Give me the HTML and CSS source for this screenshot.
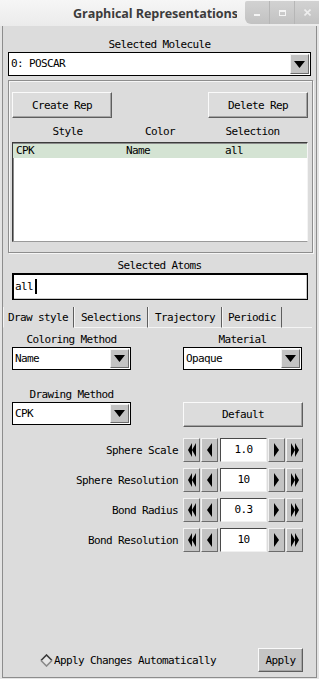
FILE: index.html
```html
<!DOCTYPE html>
<html lang="en">
<head>
    <meta charset="UTF-8">
    <meta name="viewport" content="width=device-width, initial-scale=1.0">
    <title>Graphical Representations</title>
    <link rel="stylesheet" href="styles.css">
</head>
<body>
<div class="window">
    <div class="titlebar">
        <div class="title">Graphical Representations</div>
        <div class="wm-buttons">
            <span class="wm-btn"><svg width="6" height="6"><rect x="0" y="4" width="6" height="2" fill="#f4f4f4"/></svg></span>
            <span class="wm-btn"><svg width="7" height="6"><rect x="0.5" y="0.5" width="6" height="5" fill="none" stroke="#f4f4f4"/><rect x="0" y="0" width="7" height="2" fill="#f4f4f4"/></svg></span>
            <span class="wm-btn"><svg width="7" height="7"><path d="M0.5 0.5 L6.5 6.5 M6.5 0.5 L0.5 6.5" stroke="#eeeeee" stroke-width="1.6"/></svg></span>
        </div>
    </div>

    <div class="content">
        <div class="label">Selected Molecule</div>
        <div class="combo molecule">
            <span class="combo-text">0: POSCAR</span>
            <span class="combo-arrow"><svg width="11" height="7"><polygon points="0,0 11,0 5.5,7" fill="#000"/></svg></span>
        </div>

        <div class="reps-frame">
            <div class="rep-buttons">
                <button class="tk-btn">Create Rep</button>
                <button class="tk-btn">Delete Rep</button>
            </div>
            <div class="rep-header">
                <span class="col-style">Style</span>
                <span class="col-color">Color</span>
                <span class="col-sel">Selection</span>
            </div>
            <div class="rep-list">
                <div class="rep-row selected">
                    <span class="cell-style">CPK</span>
                    <span class="cell-color">Name</span>
                    <span>all</span>
                </div>
            </div>
        </div>

        <div class="label atoms-label">Selected Atoms</div>
        <div class="entry">all<span class="caret"></span></div>

        <div class="tabs">
            <span class="tab active">Draw style</span>
            <span class="tab">Selections</span>
            <span class="tab">Trajectory</span>
            <span class="tab">Periodic</span>
            <span class="tab-rest"></span>
        </div>

        <div class="tab-body">
            <div class="pair">
                <div class="field-col">
                    <div class="label">Coloring Method</div>
                    <div class="combo small">
                        <span class="combo-text">Name</span>
                        <span class="combo-arrow"><svg width="11" height="7"><polygon points="0,0 11,0 5.5,7" fill="#000"/></svg></span>
                    </div>
                </div>
                <div class="field-col">
                    <div class="label">Material</div>
                    <div class="combo small">
                        <span class="combo-text">Opaque</span>
                        <span class="combo-arrow"><svg width="11" height="7"><polygon points="0,0 11,0 5.5,7" fill="#000"/></svg></span>
                    </div>
                </div>
            </div>

            <div class="pair second">
                <div class="field-col">
                    <div class="label">Drawing Method</div>
                    <div class="combo small">
                        <span class="combo-text">CPK</span>
                        <span class="combo-arrow"><svg width="11" height="7"><polygon points="0,0 11,0 5.5,7" fill="#000"/></svg></span>
                    </div>
                </div>
                <div class="field-col">
                    <button class="tk-btn default-btn">Default</button>
                </div>
            </div>

            <div class="spinners">
                <div class="spin-row">
                    <span class="spin-label">Sphere Scale</span>
                    <span class="arrow-btn"><svg width="8" height="14"><polygon points="4,0 4,14 0,7" /><polygon points="8,0 8,14 4,7" /></svg></span>
                    <span class="arrow-btn"><svg width="5" height="14"><polygon points="5,0 5,14 0,7" /></svg></span>
                    <span class="spin-value">1.0</span>
                    <span class="arrow-btn"><svg width="5" height="14"><polygon points="0,0 0,14 5,7" /></svg></span>
                    <span class="arrow-btn"><svg width="8" height="14"><polygon points="0,0 0,14 4,7" /><polygon points="4,0 4,14 8,7" /></svg></span>
                </div>
                <div class="spin-row">
                    <span class="spin-label">Sphere Resolution</span>
                    <span class="arrow-btn"><svg width="8" height="14"><polygon points="4,0 4,14 0,7" /><polygon points="8,0 8,14 4,7" /></svg></span>
                    <span class="arrow-btn"><svg width="5" height="14"><polygon points="5,0 5,14 0,7" /></svg></span>
                    <span class="spin-value">10</span>
                    <span class="arrow-btn"><svg width="5" height="14"><polygon points="0,0 0,14 5,7" /></svg></span>
                    <span class="arrow-btn"><svg width="8" height="14"><polygon points="0,0 0,14 4,7" /><polygon points="4,0 4,14 8,7" /></svg></span>
                </div>
                <div class="spin-row">
                    <span class="spin-label">Bond Radius</span>
                    <span class="arrow-btn"><svg width="8" height="14"><polygon points="4,0 4,14 0,7" /><polygon points="8,0 8,14 4,7" /></svg></span>
                    <span class="arrow-btn"><svg width="5" height="14"><polygon points="5,0 5,14 0,7" /></svg></span>
                    <span class="spin-value">0.3</span>
                    <span class="arrow-btn"><svg width="5" height="14"><polygon points="0,0 0,14 5,7" /></svg></span>
                    <span class="arrow-btn"><svg width="8" height="14"><polygon points="0,0 0,14 4,7" /><polygon points="4,0 4,14 8,7" /></svg></span>
                </div>
                <div class="spin-row">
                    <span class="spin-label">Bond Resolution</span>
                    <span class="arrow-btn"><svg width="8" height="14"><polygon points="4,0 4,14 0,7" /><polygon points="8,0 8,14 4,7" /></svg></span>
                    <span class="arrow-btn"><svg width="5" height="14"><polygon points="5,0 5,14 0,7" /></svg></span>
                    <span class="spin-value">10</span>
                    <span class="arrow-btn"><svg width="5" height="14"><polygon points="0,0 0,14 5,7" /></svg></span>
                    <span class="arrow-btn"><svg width="8" height="14"><polygon points="0,0 0,14 4,7" /><polygon points="4,0 4,14 8,7" /></svg></span>
                </div>
            </div>
        </div>

        <div class="footer">
            <label class="radio">
                <svg width="13" height="13">
                    <polygon points="6.5,1 12,6.5 6.5,12 1,6.5" fill="#e6e6e6"/>
                    <polyline points="1,6.5 6.5,1 12,6.5" fill="none" stroke="#3a3a3a" stroke-width="1.6"/>
                    <polyline points="1,6.5 6.5,12 12,6.5" fill="none" stroke="#8a8a8a" stroke-width="1.6"/>
                </svg>
                Apply Changes Automatically
            </label>
            <button class="tk-btn apply-btn">Apply</button>
        </div>
    </div>
</div>
</body>
</html>
```

FILE: styles.css
```css
body {
    margin: 0;
    background-color: #e4e4e4;
    font-family: 'DejaVu Sans Mono', 'Liberation Mono', monospace;
    font-size: 11px;
    letter-spacing: -0.62px;
    color: #000;
}
.window {
    width: 319px;
    height: 679px;
    display: flex;
    flex-direction: column;
}
.titlebar {
    height: 26px;
    display: flex;
    background: linear-gradient(#f6f6f6, #ebebeb);
}
.title {
    flex: 1;
    overflow: hidden;
    white-space: nowrap;
    padding-left: 73px;
    margin-right: 8px;
    font-family: 'Open Sans', 'Liberation Sans', sans-serif;
    font-weight: bold;
    font-size: 12.6px;
    letter-spacing: -0.1px;
    line-height: 27px;
    color: #3c3c3c;
}
.wm-buttons {
    width: 74px;
    height: 23px;
    margin-top: 1px;
    display: flex;
    background: linear-gradient(#d2d2d2, #c2c2c2);
    border-bottom-left-radius: 6px;
    border-top-left-radius: 2px;
}
.wm-btn {
    flex: 1;
    display: flex;
    align-items: center;
    justify-content: center;
    border-left: 1px solid #b6b6b6;
}
.wm-btn:first-child {
    border-left: none;
}
.content {
    flex: 1;
    margin: 0 2px 1px;
    border: 1px solid #8d8d8d;
    border-top: none;
    background-color: #dcdcdc;
    display: flex;
    flex-direction: column;
}
.label {
    height: 12px;
    line-height: 12px;
    text-align: center;
}
.content > .label:first-child {
    margin-top: 13px;
}
.combo {
    height: 24px;
    display: flex;
    align-items: stretch;
    background-color: #fff;
    border: 1px solid #000;
    box-sizing: border-box;
}
.combo-text {
    flex: 1;
    padding-left: 2px;
    line-height: 22px;
}
.combo-arrow {
    width: 17px;
    margin: 1px;
    display: flex;
    align-items: center;
    justify-content: center;
    background-color: #c3c3c3;
    border: 1px solid;
    border-color: #f2f2f2 #6c6c6c #6c6c6c #f2f2f2;
}
.molecule {
    margin: 1px 5px 0 5px;
}
.reps-frame {
    height: 173px;
    margin: 4px 3px 0 5px;
    border: 1px solid #8e8e8e;
    box-shadow: inset 1px 1px 0 #f6f6f6, 1px 1px 0 #f6f6f6;
    box-sizing: border-box;
    padding: 0 4px 0 3px;
}
.tk-btn {
    font-family: inherit;
    font-size: 11px;
    letter-spacing: -0.62px;
    color: #000;
    background-color: #dcdcdc;
    border: 1px solid;
    border-color: #fafafa #5e5e5e #5e5e5e #fafafa;
    box-shadow: inset -1px -1px 0 #a4a4a4;
    padding: 0;
    margin: 0;
}
.rep-buttons {
    display: flex;
    justify-content: space-between;
    margin-top: 11px;
}
.rep-buttons .tk-btn {
    width: 100px;
    height: 26px;
}
.rep-header {
    display: flex;
    height: 12px;
    line-height: 12px;
    margin-top: 8px;
}
.col-style {
    width: 114px;
    text-align: center;
}
.col-color {
    width: 76px;
    text-align: center;
}
.col-sel {
    width: 114px;
    text-align: center;
}
.rep-list {
    height: 100px;
    margin-top: 4px;
    background-color: #fff;
    border: 1px solid;
    border-color: #3c3c3c #f4f4f4 #9a9a9a #3c3c3c;
    box-shadow: inset 1px 1px 0 #8a8a8a;
    box-sizing: border-box;
    padding-top: 1px;
}
.rep-row {
    display: flex;
    height: 14px;
    line-height: 14px;
    padding-left: 3px;
}
.rep-row.selected {
    background-color: #d4e3d3;
}
.cell-style {
    width: 110px;
}
.cell-color {
    width: 99px;
}
.atoms-label {
    margin-top: 7px;
}
.entry {
    height: 27px;
    margin: 1px 8px 0 9px;
    background-color: #fff;
    border: 1px solid #000;
    box-shadow: inset 1px 1px 0 #000, inset -1px -1px 0 #c8c8c8;
    box-sizing: border-box;
    padding-left: 2px;
    line-height: 25px;
    display: flex;
    align-items: center;
}
.caret {
    display: inline-block;
    width: 2px;
    height: 15px;
    margin-left: 2px;
    background-color: #000;
}
.tabs {
    display: flex;
    height: 21px;
    margin-top: 7px;
    line-height: 22px;
}
.tab {
    padding: 0 5px;
    border-right: 1px solid #5e5e5e;
    border-left: 1px solid #f4f4f4;
    border-bottom: 1px solid #f4f4f4;
    box-sizing: border-box;
}
.tab.active {
    border-bottom-color: transparent;
    padding: 0 5px 0 4px;
}
.tab:nth-child(2) {
    padding: 0 6px;
}
.tab:nth-child(3) {
    padding: 0 6px;
}
.tab-rest {
    flex: 1;
    margin-right: 4px;
    border-bottom: 1px solid #f4f4f4;
}
.tab-body {
    display: flex;
    flex-direction: column;
}
.pair {
    display: flex;
    justify-content: space-between;
    margin: 6px 14px 0 9px;
}
.pair.second {
    margin-top: 19px;
}
.field-col {
    width: 119px;
}
.combo.small {
    height: 23px;
    margin-top: 1px;
}
.combo.small .combo-text {
    line-height: 21px;
}
.default-btn {
    width: 120px;
    height: 25px;
    margin-top: 13px;
}
.spinners {
    display: flex;
    flex-direction: column;
    gap: 6px;
    margin-top: 11px;
    padding-right: 13px;
}
.spin-row {
    display: flex;
    justify-content: flex-end;
    align-items: center;
    height: 24px;
}
.spin-label {
    margin-right: 4px;
}
.arrow-btn {
    width: 17px;
    height: 24px;
    box-sizing: border-box;
    display: flex;
    align-items: center;
    justify-content: center;
    background-color: #c3c3c3;
    border: 1px solid;
    border-color: #f2f2f2 #6c6c6c #6c6c6c #f2f2f2;
    margin-left: 1px;
}
.spin-value {
    width: 47px;
    height: 24px;
    box-sizing: border-box;
    margin-left: 2px;
    text-align: center;
    line-height: 22px;
    background-color: #fff;
    border: 1px solid;
    border-color: #4a4a4a #f0f0f0 #f0f0f0 #4a4a4a;
}
.footer {
    margin-top: auto;
    margin-bottom: 5px;
    display: flex;
    align-items: center;
    justify-content: space-between;
    padding: 0 13px 0 37px;
}
.radio {
    display: flex;
    align-items: center;
    gap: 1px;
}
.apply-btn {
    width: 45px;
    height: 24px;
    background-color: #c4c4c4;
}
```
